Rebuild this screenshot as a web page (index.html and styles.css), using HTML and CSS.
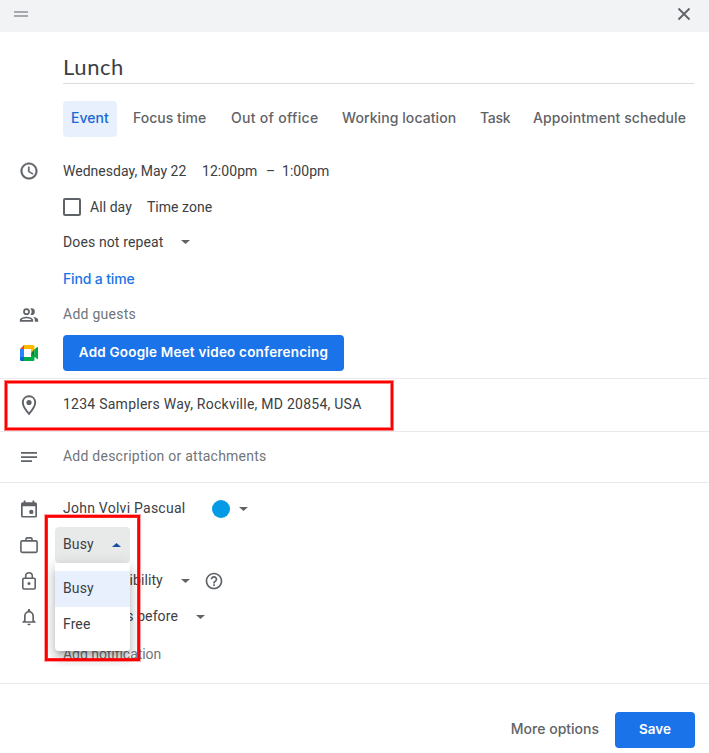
FILE: index.html
```html
<!DOCTYPE html>
<html lang="en">
<head>
<meta charset="utf-8">
<title>Lunch</title>
<link rel="stylesheet" href="styles.css">
</head>
<body>
<main class="dialog">
  <header class="bar">
    <span class="handle"></span>
    <svg class="close" viewBox="0 0 20 20"><path d="M4.500 4.500l11 11M15.500 4.500l-11 11" fill="none" stroke="currentColor" stroke-width="1.800"/></svg>
  </header>
  <h1 class="title">Lunch</h1>
  <nav class="tabs">
    <span class="tab active">Event</span><span class="tab t2">Focus time</span><span class="tab t3">Out of office</span><span class="tab t4">Working location</span><span class="tab t5">Task</span><span class="tab t6">Appointment schedule</span>
  </nav>

  <section class="block when">
    <div class="row"><svg class="icon bold" viewBox="0 0 24 24"><path d="M11.990 2C6.470 2 2 6.480 2 12s4.470 10 9.990 10C17.520 22 22 17.520 22 12S17.520 2 11.990 2zM12 20c-4.420 0-8-3.580-8-8s3.580-8 8-8 8 3.580 8 8-3.580 8-8 8zm.5-13H11v6l5.250 3.150.75-1.230-4.500-2.670z"/></svg><span class="date">Wednesday, May 22</span><span class="start">12:00pm</span><span class="dash">–</span><span class="end">1:00pm</span></div>
    <div class="row sub"><span class="check"></span><span class="allday">All day</span><span class="zone">Time zone</span></div>
    <div class="row sub repeat"><span class="rep">Does not repeat</span><i class="caret"></i></div>
    <div class="row sub find"><a class="link">Find a time</a></div>
    <div class="row guests"><svg class="icon" viewBox="0 0 24 24"><path fill-rule="evenodd" d="M9 12a4 4 0 1 0 0-8 4 4 0 0 0 0 8zm0-6a2 2 0 1 1 0 4 2 2 0 0 1 0-4zM1 18v2h16v-2c0-2.660-5.330-4-8-4s-8 1.340-8 4zm2 0c.2-.71 3.300-2 6-2s5.800 1.290 6 2H3zM15 12a4 4 0 0 0 0-8c-.47 0-.91.1-1.330.24a5.980 5.980 0 0 1 0 7.520c.42.14.86.24 1.330.24zM16.670 14.130C18.040 15.060 19 16.320 19 18v2h4v-2c0-2.180-3.570-3.470-6.330-3.870z"/></svg><span class="hint">Add guests</span></div>
    <div class="row meet"><svg class="icon" viewBox="0 0 20 20"><path fill="#2684fc" d="M1 6h4v8H1z"/><path fill="#ea4335" d="M1 6l4-4v4z"/><path fill="#ffba00" d="M5 2h9a1.500 1.500 0 0 1 1.500 1.500V7L12 10V6H5z"/><path fill="#0066da" d="M1 14h4v4H2.500A1.500 1.500 0 0 1 1 16.500z"/><path fill="#00ac47" d="M12 10l3.500 2.500v4A1.500 1.500 0 0 1 14 18H5v-4h7zM15.500 6.200L18.300 4q.7-.4.700.4v11.200q0 .8-.7.4l-2.800-2.200z"/><path fill="#00832d" d="M12 10l3.500-3.800v7.600z"/></svg><button class="primary conf">Add Google Meet video conferencing</button></div>
  </section>

  <section class="block place">
    <div class="row"><svg class="icon pin" viewBox="0 0 20 24"><path d="M10 3.200c-3.700 0-6.200 2.800-6.200 6.300 0 4.400 6.200 11.300 6.200 11.300s6.200-6.900 6.200-11.300c0-3.500-2.500-6.300-6.200-6.300z" fill="none" stroke="currentColor" stroke-width="1.900"/><circle cx="10" cy="9.500" r="2.600"/></svg><span class="address">1234 Samplers Way, Rockville, MD 20854, USA</span></div>
    <div class="mark mark-place"></div>
  </section>

  <section class="block desc">
    <div class="row"><svg class="icon" viewBox="0 0 20 20"><path d="M2 5h16v1.700H2zM2 9.200h16v1.700H2zM2 13.300h11V15H2z"/></svg><span class="hint about">Add description or attachments</span></div>
  </section>

  <section class="block options">
    <div class="row"><svg class="icon" viewBox="0 0 20 20"><path fill-rule="evenodd" d="M4.700 1.500h1.800v1.700h7V1.500h1.800v1.700h1q1.700 0 1.700 1.700v12q0 1.700-1.700 1.700H3.700Q2 18.600 2 16.900v-12q0-1.700 1.700-1.700h1zM3.700 7.300v9.600h12.600V7.300z"/><circle cx="12.300" cy="12.900" r="2.200"/></svg><span class="owner">John Volvi Pascual</span><span class="color"></span><i class="caret"></i></div>
    <div class="row busy"><svg class="icon" viewBox="0 0 20 20"><path d="M3.200 5.900h13.600q1.300 0 1.300 1.300v8.900q0 1.300-1.300 1.300H3.200q-1.300 0-1.300-1.300V7.200q0-1.300 1.300-1.300zM7 5.800V4q0-1.100 1.100-1.100h3.800Q13 2.900 13 4v1.800" fill="none" stroke="currentColor" stroke-width="1.600"/></svg>
      <div class="select"><span>Busy</span><i class="caret up"></i>
        <div class="menu"><div class="item chosen">Busy</div><div class="item">Free</div></div>
      </div>
      <div class="mark mark-busy"></div>
    </div>
    <div class="row"><svg class="icon" viewBox="0 0 20 20"><path d="M5 7.300h10q1.200 0 1.200 1.200v8.300q0 1.200-1.200 1.200H5q-1.200 0-1.200-1.200V8.500q0-1.200 1.200-1.200zM6.700 7.200V5a3.300 3.300 0 0 1 6.600 0v2.200" fill="none" stroke="currentColor" stroke-width="1.600"/><circle cx="10" cy="12.600" r="1.500"/></svg><span class="vis">Default visibility</span><i class="caret"></i><svg class="help" viewBox="0 0 24 24"><path d="M11 18h2v-2h-2v2zm1-16C6.480 2 2 6.480 2 12s4.480 10 10 10 10-4.480 10-10S17.520 2 12 2zm0 18c-4.410 0-8-3.590-8-8s3.590-8 8-8 8 3.590 8 8-3.590 8-8 8zm0-14c-2.210 0-4 1.790-4 4h2c0-1.100.9-2 2-2s2 .9 2 2c0 2-3 1.750-3 5h2c0-2.250 3-2.500 3-5 0-2.210-1.790-4-4-4z"/></svg></div>
    <div class="row"><svg class="icon" viewBox="0 0 24 24"><path d="M12 22c1.100 0 2-.9 2-2h-4c0 1.100.9 2 2 2zm6-6v-5c0-3.070-1.630-5.640-4.500-6.320V4c0-.83-.67-1.500-1.500-1.500s-1.500.67-1.500 1.500v.68C7.640 5.360 6 7.920 6 11v5l-2 2v1h16v-1l-2-2zm-2 1H8v-6c0-2.480 1.510-4.500 4-4.500s4 2.020 4 4.500v6z"/></svg><span class="before">30 minutes before</span><i class="caret"></i></div>
    <div class="row sub add"><span class="hint">Add notification</span></div>
  </section>

  <footer class="actions"><span class="more">More options</span><button class="primary save">Save</button></footer>
</main>
</body>
</html>
```

FILE: styles.css
```css
* { box-sizing: border-box; }
body { margin: 0; background: #fff; color: #3c4043; font: 14px/20px Roboto, "Liberation Sans", sans-serif; letter-spacing: .2px; }
.dialog { width: 709px; height: 753px; overflow: hidden; }
.bar { height: 32px; background: #f1f3f4; display: flex; justify-content: space-between; padding: 4px 15px 0 14px; }
.handle { width: 14px; height: 6px; margin-top: 7px; border: solid #a5a9ad; border-width: 2px 0; }
.close { width: 20px; height: 20px; color: #5f6368; }
.title { margin: 17px 15px 0 63px; height: 35px; border-bottom: 1px solid #dadce0; font: 400 22px/35px Lato, sans-serif; letter-spacing: .6px; }
.tabs { display: flex; margin: 17px 0 0 63px; height: 36px; font: 500 14px/34px Inter, sans-serif; color: #5f6368; letter-spacing: .02px; white-space: nowrap; }
.tab { padding-left: 8px; }
.tab.active { width: 54px; background: #e8f0fe; color: #1967d2; border-radius: 4px; margin-right: 8px; }
.t2, .t3, .t4, .t5 { flex: none; }
.t2 { width: 98px; }
.t3 { width: 111px; letter-spacing: .3px; }
.t4 { width: 138px; letter-spacing: .08px; }
.t5 { width: 53px; letter-spacing: -.3px; }
.t6 { letter-spacing: .1px; }
.block { border-bottom: 1px solid #e8eaed; position: relative; }
.row { height: 36px; display: flex; align-items: center; padding-left: 19px; white-space: nowrap; position: relative; }
.row > span { flex: none; }
.sub { padding-left: 63px; }
.icon { width: 20px; height: 20px; flex: none; margin-right: 24px; fill: #5f6368; color: #5f6368; }
.bold { stroke: #5f6368; stroke-width: .5px; }
.caret { width: 9px; height: 4px; background: #5f6368; clip-path: polygon(0 0, 100% 0, 50% 100%); flex: none; }
.caret.up { background: #174ea6; clip-path: polygon(50% 0, 100% 100%, 0 100%); }
.hint { color: #70757a; }
.when { padding-top: 16px; height: 242px; }
.date { width: 139px; letter-spacing: .02px; }
.start { width: 64px; letter-spacing: .06px; }
.dash { width: 16px; }
.end { letter-spacing: .05px; }
.check { width: 18px; height: 18px; border: 2px solid #5f6368; border-radius: 2px; }
.allday { margin-left: 9px; width: 57px; letter-spacing: .06px; }
.zone { letter-spacing: .02px; }
.repeat { height: 35px; padding-bottom: 1px; }
.rep { width: 118px; letter-spacing: .12px; }
.find { height: 37px; }
.link { font: 500 14px/20px Inter, sans-serif; color: #1a73e8; letter-spacing: -.15px; }
.guests .hint { margin-top: -2px; letter-spacing: .25px; }
.meet { margin-top: 2px; }
.primary { border: 0; height: 36px; padding: 0; background: #1a73e8; color: #fff; border-radius: 4px; font: 600 13.5px/34px Inter, sans-serif; }
.conf { width: 281px; letter-spacing: .2px; line-height: 33px; padding-bottom: 2px; }
.place { height: 53px; padding-top: 8px; }
.address { margin-top: -2px; letter-spacing: .25px; }
.pin { height: 24px; }
.desc { height: 51px; padding-top: 7px; }
.about { margin-top: -2px; letter-spacing: .24px; }
.options { height: 201px; padding-top: 8px; }
.owner { width: 149px; margin-top: -2px; letter-spacing: .25px; }
.color { width: 18px; height: 18px; border-radius: 50%; background: #039be5; margin-right: 9px; }
.select { position: relative; width: 75px; height: 36px; margin-left: -8px; padding: 0 9px 0 8px; background: #e8eaea; border-radius: 4px; display: flex; align-items: center; justify-content: space-between; }
.select > span { margin-top: -2px; letter-spacing: .1px; }
.menu { position: absolute; z-index: 2; left: 0; top: 36px; width: 75px; height: 88px; padding: 8px 0; background: #fff; border-radius: 0 0 4px 4px; letter-spacing: .1px; box-shadow: 0 5px 5px -3px rgba(0,0,0,.2), 0 8px 10px 1px rgba(0,0,0,.14), 0 3px 14px 2px rgba(0,0,0,.12); }
.item { height: 36px; padding: 0 8px; line-height: 35px; }
.chosen { background: #e8f0fe; }
.mark { position: absolute; z-index: 3; border: 2px solid red; pointer-events: none; }
.mark-place { left: 5px; top: 2px; width: 388px; height: 49px; box-shadow: 0 0 0 1px rgba(255,0,0,.5), inset 0 0 0 1px rgba(255,0,0,.5); }
.mark-busy { left: 45px; top: -12px; width: 95px; height: 146px; box-shadow: 0 0 0 1px rgba(255,0,0,.35), inset 0 0 0 1px rgba(255,0,0,.85); }
.vis { width: 118px; margin-top: -2px; letter-spacing: .08px; }
.help { width: 20px; height: 20px; margin-left: 14px; fill: #5f6368; }
.before { width: 133px; margin-top: -2px; letter-spacing: .1px; }
.add .hint { letter-spacing: -.05px; }
.add { margin-top: 1px; }
.actions { display: flex; justify-content: flex-end; padding: 28px 14px 0 0; }
.more { font: 500 14px/34px Inter, sans-serif; letter-spacing: 0; color: #5f6368; margin-right: 16px; }
.save { width: 80px; padding-bottom: 2px; }
```
